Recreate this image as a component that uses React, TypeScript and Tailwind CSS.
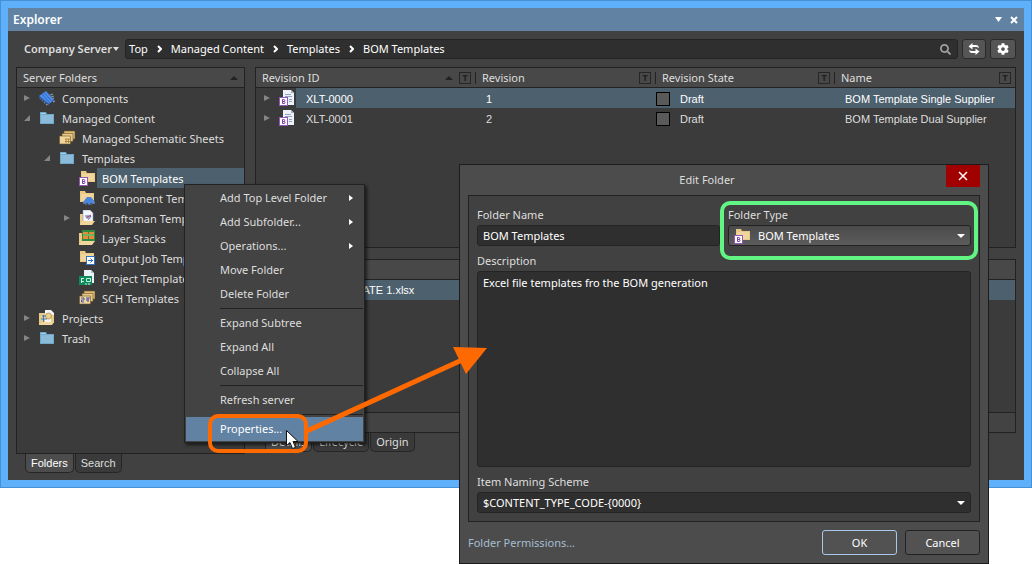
import { useState } from "react";
import type { ReactNode } from "react";
import { FaCog, FaSearch } from "react-icons/fa";

type IconName =
  | "chip"
  | "folder"
  | "sheets"
  | "bom"
  | "component"
  | "draftsman"
  | "layers"
  | "output"
  | "project"
  | "sch"
  | "projects";

interface TreeNode {
  label: string;
  icon: IconName;
  level: 0 | 1 | 2;
  state?: "open" | "closed";
}

const tree: TreeNode[] = [
  { label: "Components", icon: "chip", level: 0, state: "closed" },
  { label: "Managed Content", icon: "folder", level: 0, state: "open" },
  { label: "Managed Schematic Sheets", icon: "sheets", level: 1 },
  { label: "Templates", icon: "folder", level: 1, state: "open" },
  { label: "BOM Templates", icon: "bom", level: 2 },
  { label: "Component Templates", icon: "component", level: 2 },
  { label: "Draftsman Templates", icon: "draftsman", level: 2, state: "closed" },
  { label: "Layer Stacks", icon: "layers", level: 2 },
  { label: "Output Job Templates", icon: "output", level: 2 },
  { label: "Project Templates", icon: "project", level: 2 },
  { label: "SCH Templates", icon: "sch", level: 2 },
  { label: "Projects", icon: "projects", level: 0, state: "closed" },
  { label: "Trash", icon: "folder", level: 0, state: "closed" },
];

const revisions = [
  { id: "XLT-0000", revision: 1, state: "Draft", name: "BOM Template Single Supplier" },
  { id: "XLT-0001", revision: 2, state: "Draft", name: "BOM Template Dual Supplier" },
];

const menuGroups = [
  [
    { label: "Add Top Level Folder", sub: true },
    { label: "Add Subfolder...", sub: true },
    { label: "Operations...", sub: true },
    { label: "Move Folder" },
    { label: "Delete Folder" },
  ],
  [{ label: "Expand Subtree" }, { label: "Expand All" }, { label: "Collapse All" }],
  [{ label: "Refresh server" }],
  [{ label: "Properties...", active: true }],
];

const indent = { 0: "pl-[6px]", 1: "pl-[26px]", 2: "pl-[46px]" };

const tan = "#e8c987";

function TanFolder() {
  return (
    <>
      <path d="M1 1h5l1 2h8v9H1z" fill={tan} />
      <path d="M2 4h12v7H2z" fill="#f0d69c" />
    </>
  );
}

function BBadge() {
  return (
    <>
      <rect x="0.5" y="7.5" width="8" height="8" fill="#fff" stroke="#9457b5" />
      <path d="M3.5 9.5v4h1.500a1 1 0 0 0 0-2h-1.500 1.300a1 1 0 0 0 0-2z" fill="none" stroke="#7d3fa3" />
    </>
  );
}

function SheetStack() {
  return (
    <g stroke="#6d5527" strokeWidth="0.6">
      <path d="M5 1h11v8H5z" fill="#dfbc72" />
      <path d="M3 3.500h11v8H3z" fill="#e8c987" />
      <path d="M0.500 6h11v8h-11z" fill="#f0d69c" />
    </g>
  );
}

function Icon({ name }: { name: IconName }) {
  return (
    <svg viewBox="0 0 16 16" className="size-4 shrink-0" aria-hidden="true">
      {name === "chip" && (
        <>
          <path d="M1 9l2-1M3 11l2-1M5 13l2-1M7 15l2-1M11 5l3-1M12 7l3-1M13 9l2-1M14 12l2-1" stroke="#8f9aa8" strokeWidth="1.200" />
          <path d="M0 6l7-5 8 9-5 4z" fill="#4b8bea" />
          <path d="M3 4l8 9M5 2.500l8 9" stroke="#2c63bd" strokeWidth="0.800" />
          <path d="M0 6l10 8v1.500L0 8z" fill="#2c5ca8" />
        </>
      )}
      {name === "folder" && (
        <>
          <path d="M1 2h6l1 2h7v10H1z" fill="#6fa9ca" />
          <path d="M2 3h4l1 1H2z" fill="#a9d3e8" />
          <path d="M2 5h12v8H2z" fill="#8bbbd8" />
        </>
      )}
      {name === "sheets" && (
        <>
          <SheetStack />
          <path d="M6 9h5M6 11.500h5M7 9v4M9.500 9v4" stroke="#9c7931" strokeWidth="0.800" />
        </>
      )}
      {name === "bom" && (
        <>
          <g transform="translate(1 0)"><TanFolder /></g>
          <BBadge />
        </>
      )}
      {name === "component" && (
        <>
          <TanFolder />
          <path d="M4 12l4-5h4l4 5-2 2-2-1-2 2-2-2-2 1z" fill="#4a86dc" />
          <path d="M4 13h2M14 13h2M7 14v1M12 14v1" stroke="#7f93b0" />
        </>
      )}
      {name === "draftsman" && (
        <>
          <path d="M1 4h3v11H1z" fill={tan} />
          <path d="M4 0h7l3 3v9H4z" fill="#f4f6fa" stroke="#8ba0c0" strokeWidth="0.600" />
          <path d="M6 6h6L9.500 9.500M9 6v3" stroke="#4a62b8" fill="none" />
          <path d="M7 8l5-3" stroke="#b5455f" />
          <path d="M1 15l2-4h13l-3 4z" fill="#f0d69c" />
        </>
      )}
      {name === "layers" && (
        <>
          <path d="M0 3h3v12H0z" fill={tan} />
          <path d="M3 0h13v11H3z" fill="#2f8b3e" />
          <path d="M4 2h5v2H4zM10 2h5v2h-5zM4 6h5v3H4zM10 6h5v3h-5z" fill="#e78a3d" />
          <path d="M4 5h11" stroke="#b6dd74" />
          <path d="M0 15l3-4h13l-3 4z" fill="#f0d69c" />
        </>
      )}
      {name === "output" && (
        <>
          <TanFolder />
          <rect x="7.500" y="6.500" width="8" height="8" fill="#fff" stroke="#2e72c4" />
          <path d="M9 10.500h5M11.500 8.500l2 2-2 2" stroke="#2e72c4" fill="none" />
        </>
      )}
      {name === "project" && (
        <>
          <path d="M5 0h7l3 3v10H5z" fill="#e9f2f4" />
          <path d="M12 0v3h3z" fill="#a8c3cc" />
          <path d="M0 6h13v9H0z" fill="#0e8a5f" />
          <path d="M2 8.500h3M2 11.500h3M2.500 8v5M7.500 8.500h4v3h-4zM7 15v-2M10 15v-2" stroke="#c9f2de" fill="none" />
        </>
      )}
      {name === "sch" && (
        <>
          <SheetStack />
          <path d="M2 8h3v2H2.500v2H5M7 8h4M9 8v4M7 10h3" stroke="#4a55a8" fill="none" />
        </>
      )}
      {name === "projects" && (
        <>
          <path d="M0 3h6v12H0z" fill={tan} />
          <path d="M6 0h6l3 3v9H6z" fill="#f4f6fa" />
          <path d="M12 5h3v8h-3z" fill={tan} />
          <circle cx="9.500" cy="6" r="3" fill="#ecd08f" stroke="#a98b48" strokeWidth="0.800" />
          <path d="M3 6h4M2 9h6M4.500 5v7" stroke="#3d7cb5" />
          <path d="M0 15l3-3h12l-2 3z" fill="#f0d69c" />
        </>
      )}
    </svg>
  );
}

function DocIcon() {
  return (
    <svg viewBox="0 0 16 16" className="size-4 shrink-0" aria-hidden="true">
      <path d="M4 0h8l3 3v12H4z" fill="#eef2f8" />
      <path d="M12 0v3h3z" fill="#9fb2cc" />
      <path d="M6 4.500h6M6 6.500h7M10 9.500h3M10 11.500h3" stroke="#8fa3c4" />
      <BBadge />
    </svg>
  );
}

function Expander({ state }: { state?: "open" | "closed" }) {
  return (
    <svg viewBox="0 0 8 8" className="size-2 shrink-0" fill="#858585" aria-hidden="true">
      {state === "closed" && <path d="M1 1l6 3-6 3z" />}
      {state === "open" && <path d="M7 1v6H1z" />}
    </svg>
  );
}

function Triangle({ className }: { className: string }) {
  return (
    <svg viewBox="0 0 8 4" className={`h-1 w-2 shrink-0 ${className}`} fill="currentColor" aria-hidden="true">
      <path d="M0 0h8L4 4z" />
    </svg>
  );
}

function HeaderCell({ label, width, sorted, last }: { label: string; width: string; sorted?: boolean; last?: boolean }) {
  return (
    <th className={`${width} h-5 border-b border-[#222] bg-[#484848] p-0 font-normal`}>
      <div className="flex h-[19px] items-center pl-[6px]">
        <span className="flex-1 text-left">{label}</span>
        {sorted && <Triangle className="mr-[6px] rotate-180 text-[#222]" />}
        <span className="mr-1 flex size-3 items-center justify-center border border-[#262626] text-[9px] leading-none font-bold text-[#1f1f1f]">
          T
        </span>
        {!last && <span className="h-3 w-px bg-[#222]" />}
      </div>
    </th>
  );
}

function Tab({ label, active }: { label: string; active?: boolean }) {
  return (
    <button
      className={`h-[19px] rounded-b-[5px] border border-t-0 border-[#262626] px-[5px] leading-4 ${active ? "bg-[#4c4c4c] text-white" : "bg-[#3a3a3a]"}`}
    >
      {label}
    </button>
  );
}

function FolderTree() {
  const [selected, setSelected] = useState("BOM Templates");

  return (
    <div className="flex w-[229px] shrink-0 flex-col">
      <div className="flex-1 border border-[#222] bg-[#3b3b3b]">
        <div className="flex h-5 items-center justify-between border-b border-[#222] bg-[#484848] px-[6px]">
          <span>Server Folders</span>
          <Triangle className="rotate-180 text-[#222]" />
        </div>
        <ul>
          {tree.map((node) => (
            <li key={node.label} className={`flex h-5 items-center ${indent[node.level]}`}>
              <Expander state={node.state} />
              <span className="ml-2 flex">
                <Icon name={node.icon} />
              </span>
              <button
                onClick={() => setSelected(node.label)}
                className={`ml-[2px] h-5 min-w-0 flex-1 overflow-hidden pt-[2px] pl-[5px] text-left whitespace-nowrap ${selected === node.label ? "bg-[#4d606e] text-white" : ""}`}
              >
                {node.label}
              </button>
            </li>
          ))}
        </ul>
      </div>
      <div className="flex gap-px pl-[9px] font-['Liberation_Sans',sans-serif]">
        <Tab label="Folders" active />
        <Tab label="Search" />
      </div>
    </div>
  );
}

function RevisionTable() {
  return (
    <div className="h-[181px] border border-[#222] bg-[#3b3b3b]">
      <table className="w-full table-fixed border-separate border-spacing-0">
        <thead>
          <tr>
            <HeaderCell label="Revision ID" width="w-[220px]" sorted />
            <HeaderCell label="Revision" width="w-[180px]" />
            <HeaderCell label="Revision State" width="w-[179px]" />
            <HeaderCell label="Name" width="w-auto" last />
          </tr>
        </thead>
        <tbody className="font-['Liberation_Sans',sans-serif]">
          {revisions.map((row, i) => {
            const bg = i === 0 ? "bg-[#4d606e] text-white" : "";
            return (
              <tr key={row.id} className="h-5">
                <td className="p-0">
                  <div className="flex h-5 items-center pl-[7px]">
                    <Expander state="closed" />
                    <span className="mr-px ml-2 flex">
                      <DocIcon />
                    </span>
                    <span className={`h-5 flex-1 pt-[3px] pl-[10px] ${bg}`}>{row.id}</span>
                  </div>
                </td>
                <td className={`p-0 pt-[2px] pl-[10px] ${bg}`}>{row.revision}</td>
                <td className={`p-0 pt-[2px] ${bg}`}>
                  <div className="flex items-center gap-[10px]">
                    <span className="size-[14px] border border-black bg-[#5a5a5a]" />
                    {row.state}
                  </div>
                </td>
                <td className={`p-0 pt-[2px] pl-[10px] whitespace-nowrap ${bg}`}>{row.name}</td>
              </tr>
            );
          })}
        </tbody>
      </table>
    </div>
  );
}

function ExplorerWindow() {
  const path = ["Top", "Managed Content", "Templates", "BOM Templates"];

  return (
    <div className="flex flex-1 flex-col border border-[#4690d6] bg-[#5fb0fb] p-[7px]">
      <header className="flex h-[23px] items-center justify-between bg-[#6182a2] px-[5px] text-white">
        <h1 className="text-[12px] font-semibold">Explorer</h1>
        <div className="flex items-center gap-2">
          <button aria-label="Panel menu" className="flex">
            <svg viewBox="0 0 7 5" className="h-[5px] w-[7px]" fill="#fff">
              <path d="M0 0h7L3.500 5z" />
            </svg>
          </button>
          <button aria-label="Close panel" className="mr-px flex">
            <svg viewBox="0 0 8 8" className="size-2" stroke="#fff" strokeWidth="2">
              <path d="M1 1l6 6M7 1L1 7" />
            </svg>
          </button>
        </div>
      </header>

      <div className="flex flex-1 flex-col bg-[#414141] px-2 pt-2 pb-[7px]">
        <div className="mb-2 flex h-5 items-center gap-1">
          <button className="ml-2 flex items-center gap-px font-semibold whitespace-nowrap">
            Company Server
            <svg viewBox="0 0 6 4" className="h-1 w-[6px]" fill="#e0e0e0">
              <path d="M0 0h6L3 4z" />
            </svg>
          </button>
          <nav aria-label="Path" className="ml-[2px] flex h-5 flex-1 items-center rounded-[3px] border border-[#242424] bg-[#2f2f2f] px-[3px] text-white">
            {path.map((part, i) => (
              <span key={part} className="flex items-center">
                {i > 0 && (
                  <svg viewBox="0 0 5 8" className="mx-[9px] h-2 w-[5px]" fill="none" stroke="#fff" strokeWidth="2">
                    <path d="M1 1l3 3-3 3" />
                  </svg>
                )}
                <a href="#">{part}</a>
              </span>
            ))}
            <FaSearch className="mr-[3px] ml-auto size-[11px] text-[#a0a0a0]" />
          </nav>
          <button aria-label="Refresh" className="flex h-5 w-6 items-center justify-center rounded-[3px] border border-[#2a2a2a] bg-[#555]">
            <svg viewBox="0 0 12 12" className="size-3" fill="#fff">
              <path d="M0.500 3.500L4.500 0v2H8q2.500 0 3 3-1.500-1-3-1H4.500v2.500z" />
              <path d="M11.500 8.500L7.500 12v-2H4Q1.500 10 1 7q1.500 1 3 1h3.500V5.500z" />
            </svg>
          </button>
          <button aria-label="Settings" className="flex h-5 w-[26px] items-center justify-center rounded-[3px] border border-[#2a2a2a] bg-[#555]">
            <FaCog className="size-3 text-white" />
          </button>
        </div>

        <div className="flex flex-1 gap-[10px]">
          <FolderTree />
          <div className="mb-10 flex min-w-0 flex-1 flex-col">
            <RevisionTable />
            <div className="mt-[11px] flex flex-1 flex-col border border-[#222] bg-[#3b3b3b]">
              <div className="h-5 border-b border-[#222] bg-[#484848]" />
              <div className="h-5 bg-[#4d606e] pl-[42px] font-['Liberation_Sans',sans-serif] leading-5 text-white">
                BOM TEMPLATE 1.xlsx
              </div>
              <div className="mt-auto h-5 border-t border-[#222] bg-[#434343]" />
            </div>
            <div className="-mb-[19px] flex gap-px pl-[10px]">
              <Tab label="Details" active />
              <Tab label="Lifecycle" />
              <Tab label="Origin" />
            </div>
          </div>
        </div>
      </div>
    </div>
  );
}

function ContextMenu() {
  return (
    <div
      role="menu"
      className="absolute top-[184px] left-[184px] w-[181px] border border-[#222] bg-[#434343] p-px shadow-[2px_2px_3px_rgba(0,0,0,0.6)]"
    >
      {menuGroups.map((group, i) => (
        <div key={i}>
          {i > 0 && <div className="my-[2px] ml-[34px] h-px bg-[#222]" />}
          {group.map((item: { label: string; sub?: boolean; active?: boolean }) => (
            <button
              key={item.label}
              role="menuitem"
              className={`flex h-6 w-full items-center justify-between pr-[10px] pl-[34px] ${item.active ? "bg-[#6182a2] text-white" : ""}`}
            >
              {item.label}
              {item.sub && (
                <svg viewBox="0 0 4 6" className="h-[6px] w-1" fill="#fff">
                  <path d="M0 0l4 3-4 3z" />
                </svg>
              )}
            </button>
          ))}
        </div>
      ))}
    </div>
  );
}

function Field({ id, label, children }: { id: string; label: string; children: ReactNode }) {
  return (
    <div className="flex min-w-0 flex-1 flex-col">
      <label htmlFor={id} className="h-5 leading-5">
        {label}
      </label>
      {children}
    </div>
  );
}

function EditFolderDialog() {
  return (
    <div
      role="dialog"
      aria-label="Edit Folder"
      className="absolute top-[164px] right-[43px] left-[459px] border border-[#1c1c1c] bg-[#4c4c4c] px-2"
    >
      <div className="relative flex h-[30px] items-center justify-center pr-[34px]">
        <h2>Edit Folder</h2>
        <button aria-label="Close" className="absolute top-0 right-0 flex h-[22px] w-[34px] items-center justify-center bg-[#a00000]">
          <svg viewBox="0 0 10 10" className="size-[10px]" stroke="#fff" strokeWidth="1.500">
            <path d="M1 1l8 8M9 1L1 9" />
          </svg>
        </button>
      </div>

      <div className="border border-[#222] bg-[#414141] px-2 pt-[9px] pb-2">
        <div className="flex gap-2">
          <Field id="folder-name" label="Folder Name">
            <input
              id="folder-name"
              defaultValue="BOM Templates"
              className="h-[21px] w-full rounded-[3px] border border-[#242424] bg-[#2f2f2f] px-[5px] text-white"
            />
          </Field>
          <Field id="folder-type" label="Folder Type">
            <div className="relative">
              <select
                id="folder-type"
                className="h-[21px] w-full appearance-none rounded-[3px] border border-[#222] bg-linear-to-b from-[#4a4a4a] to-[#5c5c5c] pl-[29px] text-white"
              >
                <option>BOM Templates</option>
              </select>
              <span className="pointer-events-none absolute top-[3px] left-[6px] flex">
                <Icon name="bom" />
              </span>
              <Triangle className="pointer-events-none absolute top-[9px] right-[6px] text-white" />
            </div>
          </Field>
        </div>
        <div className="mt-[5px] flex">
          <Field id="description" label="Description">
            <textarea
              id="description"
              defaultValue="Excel file templates fro the BOM generation"
              className="h-[196px] w-full resize-none rounded-[3px] border border-[#242424] bg-[#2f2f2f] px-[5px] pt-[3px] leading-4 text-white"
            />
          </Field>
        </div>
        <div className="mt-[5px] flex">
          <Field id="naming-scheme" label="Item Naming Scheme">
            <div className="relative">
              <select
                id="naming-scheme"
                className="h-[21px] w-full appearance-none rounded-[3px] border border-[#242424] bg-[#2f2f2f] px-[5px] text-white"
              >
                <option>{"$CONTENT_TYPE_CODE-{0000}"}</option>
              </select>
              <Triangle className="pointer-events-none absolute top-[9px] right-[6px] text-white" />
            </div>
          </Field>
        </div>
      </div>

      <div className="flex items-center gap-2 py-2">
        <a href="#" className="mr-auto text-[#a6bdd2]">
          Folder Permissions...
        </a>
        <button className="h-[25px] w-[75px] rounded-[3px] border border-[#a9c9ea] bg-[#525252] text-white">OK</button>
        <button className="h-[25px] w-[75px] rounded-[3px] border border-[#222] bg-[#525252] text-white">Cancel</button>
      </div>
    </div>
  );
}

function Callouts() {
  return (
    <div className="pointer-events-none">
      <div className="absolute top-[201px] right-[54px] h-[59px] w-[258px] rounded-[10px] border-4 border-[#63f583]" />
      <div className="absolute top-[414px] left-[208px] h-[39px] w-[100px] rounded-[10px] border-4 border-[#ff6a00]" />
      <svg viewBox="0 0 190 100" className="absolute top-[340px] left-[300px] h-[100px] w-[190px]">
        <path d="M7 91L162 20" stroke="#ff6a00" strokeWidth="5" />
        <path d="M153 7l34 1-21 26z" fill="#ff6a00" />
      </svg>
      <svg viewBox="0 0 13 20" className="absolute top-[430px] left-[286px] h-5 w-[13px]">
        <path d="M0.500 0.500v15l3.500-3 2.500 6 3-1.200-2.500-5.800h5z" fill="#fff" stroke="#111" />
      </svg>
    </div>
  );
}

export default function App() {
  return (
    <div className="relative flex min-h-screen flex-col bg-white pb-[76px] font-['Noto_Sans','Open_Sans',sans-serif] text-[11px] leading-4 text-[#dedede]">
      <ExplorerWindow />
      <ContextMenu />
      <EditFolderDialog />
      <Callouts />
    </div>
  );
}
